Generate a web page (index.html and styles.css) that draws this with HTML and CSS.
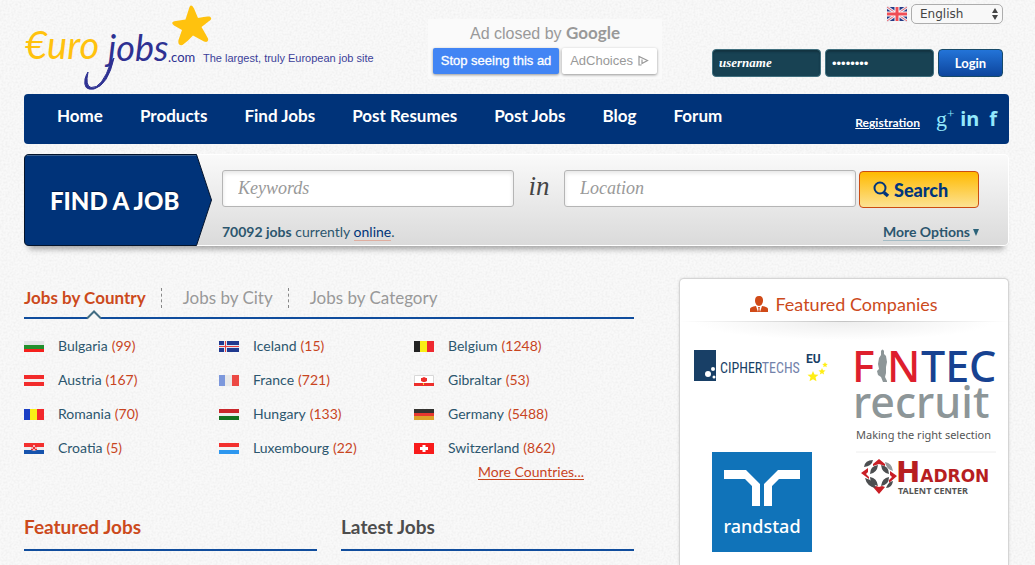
FILE: index.html
```html
<!DOCTYPE html>
<html lang="en">
<head>
<meta charset="utf-8">
<title>Eurojobs.com</title>
<link rel="stylesheet" href="styles.css">
</head>
<body>
<header class="header">
  <a class="logo" href="#" aria-label="Eurojobs.com">
    <svg width="360" height="94" viewBox="24 0 360 94">
      <path d="M189.500 7 Q191.500 3.500 194 8.500 L198 18 Q206 16 209.500 16.500 Q213.500 18.500 208.500 21.500 L201.500 27 Q205 33 208 38.500 Q209 43 204 41.500 L193 35.500 Q188 41 182.500 45 Q177.500 46 178.500 40 L182 30 L174 25.500 Q169.500 22 176 21 L185.500 19.500 Z" fill="#ffc20e"/>
      <text class="logo-euro" x="25" y="59">€uro</text>
      <text class="logo-jobs" x="108" y="61">jobs</text>
      <path d="M114 58 Q108 85 94 89 Q83 91 85 79 Q86 75 88 72 Q85 86 91 87.500 Q102 89 111 62 Z" fill="#2e3192" stroke="#2e3192"/>
      <text class="logo-com" x="168" y="62">.com</text>
      <text class="logo-tag" x="203" y="62">The largest, truly European job site</text>
    </svg>
  </a>
  <div class="ad">
    <p class="ad-title">Ad closed by <b>Google</b></p>
    <div class="ad-actions">
      <button class="ad-stop" type="button">Stop seeing this ad</button>
      <button class="ad-choices" type="button">AdChoices
        <svg width="11" height="12" viewBox="0 0 11 12" fill="none" stroke="#999" stroke-width="1.200"><path d="M3.500 10H1V1.500L9.500 5.500 4 8.500V4.500"/></svg>
      </button>
    </div>
  </div>
  <div class="account">
    <div class="language">
      <svg width="20" height="14" viewBox="0 0 20 14"><path fill="#243a86" d="M0 0h20v14H0z"/><path d="M0 0l20 14M20 0L0 14" stroke="#e4e6f0" stroke-width="3"/><path d="M0 0l20 14M20 0L0 14" stroke="#ec6a70"/><path d="M10 0v14M0 7h20" stroke="#fff" stroke-width="5"/><path d="M10 0v14M0 7h20" stroke="#ef4d55" stroke-width="3"/></svg>
      <span class="select-wrap">
        <select class="select" aria-label="Language"><option>English</option></select>
        <svg class="select-arrows" width="6" height="12" viewBox="0 0 6 12" fill="#444"><path d="M3 0l3 5H0zM3 12L0 7h6z"/></svg>
      </span>
    </div>
    <form class="login">
      <input class="login-field" type="text" value="username" aria-label="Username">
      <input class="login-field login-pass" type="password" value="password" aria-label="Password">
      <button class="login-button" type="button">Login</button>
    </form>
  </div>
</header>

<nav class="nav">
  <div class="nav-links">
    <a href="#">Home</a><a href="#">Products</a><a href="#">Find Jobs</a><a href="#">Post Resumes</a><a href="#">Post Jobs</a><a href="#">Blog</a><a href="#">Forum</a>
  </div>
  <div class="nav-side">
    <a class="register" href="#">Registration</a>
    <a class="social social-g" href="#" aria-label="Google Plus">g<sup>+</sup></a>
    <a class="social" href="#" aria-label="LinkedIn">in</a>
    <a class="social social-f" href="#" aria-label="Facebook">f</a>
  </div>
</nav>

<section class="finder">
  <div class="finder-label">
    <svg class="finder-shape" viewBox="0 0 188 92" preserveAspectRatio="none"><path d="M5 .5H172.500L187.500 46 172.500 91.500H5Q.5 91.500 .5 87V5Q.5 .5 5 .5Z" fill="#003379" stroke="#04142c"/><path d="M3 1.500H172" stroke="#3c5f8c"/></svg>
    <h1>FIND A JOB</h1>
  </div>
  <form class="finder-form">
    <div class="finder-row">
      <input class="finder-input" type="text" placeholder="Keywords" aria-label="Keywords">
      <span class="finder-in">in</span>
      <input class="finder-input" type="text" placeholder="Location" aria-label="Location">
      <button class="search" type="button">
        <svg width="17" height="17" viewBox="0 0 17 17" fill="none" stroke="#00357c"><circle cx="7" cy="7" r="5.500" stroke-width="2"/><path d="M11 11.500l4 3.500" stroke-width="3.500"/></svg>
        Search
      </button>
    </div>
    <div class="finder-info">
      <p><b>70092 jobs</b> currently <a class="online" href="#">online</a>.</p>
      <p class="options"><a href="#">More Options</a> <svg width="6" height="7" viewBox="0 0 6 7"><path d="M0 0h6L3 7z" fill="#2c6379"/></svg></p>
    </div>
  </form>
</section>

<main class="main">
  <div class="content">
    <nav class="tabs">
      <a class="tab tab-active" href="#">Jobs by Country<svg class="notch" width="16" height="10" viewBox="0 0 16 10"><path d="M1 8.500L8 1.500 15 8.500V10H1z" fill="#f7f7f7"/><path d="M1 8.500L8 1.500 15 8.500" fill="none" stroke="#426d83" stroke-width="2"/></svg></a>
      <a class="tab" href="#">Jobs by City</a>
      <a class="tab" href="#">Jobs by Category</a>
    </nav>
    <ul class="countries">
      <li><svg class="flag" viewBox="0 0 20 11"><path fill="#e2e5e5" d="M0 0h20v4H0z"/><path fill="#22902d" d="M0 4h20v4H0z"/><path fill="#f5201c" d="M0 8h20v3H0z"/></svg><a href="#">Bulgaria</a> <span>(99)</span></li>
      <li><svg class="flag" viewBox="0 0 20 11"><path fill="#20398f" d="M0 0h20v11H0z"/><path d="M6.500 0v11M0 5.500h20" stroke="#dce6f5" stroke-width="3"/><path d="M6.500 0v11M0 5.500h20" stroke="#e9403f"/></svg><a href="#">Iceland</a> <span>(15)</span></li>
      <li><svg class="flag" viewBox="0 0 20 11"><path fill="#222" d="M0 0h7v11H0z"/><path fill="#f9ee16" d="M6 0h8v11H6z"/><path fill="#ee2930" d="M13 0h7v11h-7z"/></svg><a href="#">Belgium</a> <span>(1248)</span></li>
      <li><svg class="flag" viewBox="0 0 20 11"><path fill="#f22b2b" d="M0 0h20v11H0z"/><path fill="#f5eeee" d="M0 4h20v3H0z"/></svg><a href="#">Austria</a> <span>(167)</span></li>
      <li><svg class="flag" viewBox="0 0 20 11"><path fill="#7d98dc" d="M0 0h7v11H0z"/><path fill="#e9e9e9" d="M6 0h8v11H6z"/><path fill="#ec4944" d="M13 0h7v11h-7z"/></svg><a href="#">France</a> <span>(721)</span></li>
      <li><svg class="flag" viewBox="0 0 20 11"><path fill="#fff" stroke="#d8d8d8" d="M.5 .5h19v8H.5z"/><path fill="#ed2e2b" d="M0 8h20v3H0zM7 3h1l2-1 2 1h1v3l-2 1H9L7 6z"/><path fill="#f6d137" d="M9 8h1v2H9z"/></svg><a href="#">Gibraltar</a> <span>(53)</span></li>
      <li><svg class="flag" viewBox="0 0 20 11"><path fill="#1b3fc4" d="M0 0h7v11H0z"/><path fill="#f9ee16" d="M6 0h8v11H6z"/><path fill="#f2282c" d="M13 0h7v11h-7z"/></svg><a href="#">Romania</a> <span>(70)</span></li>
      <li><svg class="flag" viewBox="0 0 20 11"><path fill="#ca272c" d="M0 0h20v4H0z"/><path fill="#eee" d="M0 4h20v3H0z"/><path fill="#137322" d="M0 7h20v4H0z"/></svg><a href="#">Hungary</a> <span>(133)</span></li>
      <li><svg class="flag" viewBox="0 0 20 11"><path fill="#343330" d="M0 0h20v4H0z"/><path fill="#e73830" d="M0 4h20v3H0z"/><path fill="#dda329" d="M0 7h20v4H0z"/></svg><a href="#">Germany</a> <span>(5488)</span></li>
      <li><svg class="flag" viewBox="0 0 20 11"><path fill="#f3302e" d="M0 0h20v4H0z"/><path fill="#eee" d="M0 4h20v3H0z"/><path fill="#1653ad" d="M0 7h20v4H0z"/><path fill="#f3b4b4" d="M7 2h6v5l-3 1-3-1z"/><path fill="#ee2c31" d="M7 2h2v2H7zM11 2h2v2h-2zM9 4h2v2H9zM7 6h2v1H7zM11 6h2v1h-2z"/></svg><a href="#">Croatia</a> <span>(5)</span></li>
      <li><svg class="flag" viewBox="0 0 20 11"><path fill="#f3302e" d="M0 0h20v4H0z"/><path fill="#f3f3f3" d="M0 4h20v3H0z"/><path fill="#2d97ef" d="M0 7h20v4H0z"/></svg><a href="#">Luxembourg</a> <span>(22)</span></li>
      <li><svg class="flag" viewBox="0 0 20 11"><path fill="#f81b1b" d="M0 0h20v11H0z"/><path d="M10 2v7M6 5.500h8" stroke="#fff" stroke-width="3"/></svg><a href="#">Switzerland</a> <span>(862)</span></li>
    </ul>
    <p class="more"><a href="#">More Countries...</a></p>
    <div class="jobs">
      <h2 class="jobs-title jobs-featured">Featured Jobs</h2>
      <h2 class="jobs-title">Latest Jobs</h2>
    </div>
  </div>

  <aside class="companies">
    <h2 class="companies-title">
      <svg width="18" height="16" viewBox="0 0 18 16" fill="#d04a18"><path d="M9 0c3 0 4 2 4 4.500S11.500 10 9 10 5 7 5 4.500 6 0 9 0z"/><path d="M0 16v-3q0-2 6-3l2 6zM18 16v-3q0-2-6-3l-2 6zM8 11h2l-.5 2 .5 3H8l.5-3z"/></svg>
      Featured Companies
    </h2>
    <div class="company-grid">
      <a href="#" aria-label="CipherTechs EU">
        <svg width="136" height="36" viewBox="0 0 136 36">
          <path fill="#183f66" d="M0 2h22v31H0z"/><circle cx="14" cy="26" r="3" fill="#fff"/><circle cx="19" cy="21" r="2" fill="#fff"/><circle cx="20" cy="29" r="1.500" fill="#fff"/>
          <text class="cipher" x="26" y="25"><tspan fill="#183f66">CIPHER</tspan><tspan fill="#7382aa">TECHS</tspan></text>
          <text class="cipher-eu" x="112" y="15">EU</text>
          <path fill="#ffee14" d="M119 23l1.500 3.500 4 .3-3 2.500 1 4-3.500-2-3.500 2 1-4-3-2.500 4-.3zM128 20l1 2.300 2.500.2-2 1.700.6 2.400-2.100-1.300-2.200 1.300.7-2.400-2-1.700 2.500-.2zM131 14l.8 1.800 2 .2-1.500 1.200.4 2-1.700-1-1.700 1 .4-2-1.500-1.200 2-.2z"/>
        </svg>
      </a>
      <a href="#" aria-label="Fintec Recruit">
        <svg width="142" height="104" viewBox="0 0 142 104">
          <text class="fintec" y="34"><tspan x="-3" fill="#de1f2d">F</tspan><tspan x="32" fill="#de1f2d">N</tspan><tspan x="66" fill="#174291">TEC</tspan></text>
          <path fill="#8d9698" d="M26 3q1.500-3 3 0v3l2 2 1 6-1 5v6l-1 4 2 4v1h-4l-2-5-3-2-1-4 2-2-1-5 1-6 2-3z"/>
          <text class="recruit" x="-2" y="70">recruit</text>
          <text class="fintec-tag" x="1" y="91">Making the right selection</text>
          <path d="M1 104h140" stroke="#eee"/>
        </svg>
      </a>
      <a href="#" aria-label="Randstad">
        <svg width="100" height="100" viewBox="0 0 100 100">
          <path fill="#1073b9" d="M0 0h100v100H0z"/>
          <path fill="#fff" d="M12 18h22l14 14v22h-8V34l-7-7H12zM88 18H66L52 32v22h8V34l7-7h21z"/>
          <text class="randstad" x="50" y="81" text-anchor="middle">randstad</text>
        </svg>
      </a>
      <a href="#" aria-label="Hadron Talent Center">
        <svg width="132" height="44" viewBox="0 0 132 44">
          <g fill="#c91f26"><path d="M13 12l6-5 6 5v2l-6-2-6 2z"/><path d="M1 21l7-5v4l-2 2 3 3v2z"/><path d="M37 24l-7-5v4l2 2-3 3v3z"/><path d="M13 35l3-1 3 1 3-1 3 1-6 7z"/></g>
          <g fill="#4c4e50"><path d="M4 15q1-7 9-7-1 6-9 7z"/><path d="M25 10q7 1 8 9-7-2-8-9z" fill="#96999b"/><path d="M5 26q9 2 11 10-9-1-11-10z"/><path d="M26 36q2-6 7-7-1 7-7 7z"/><path d="M10 22q0-8 8-9-1 8-8 9zM21 13q8 1 8 9-7-1-8-9zM10 25q7 1 8 9-8-1-8-9zM29 25q0 8-8 9 1-8 8-9z"/></g>
          <text class="hadron" x="36" y="30"><tspan class="hadron-h">H</tspan><tspan>ADRON</tspan></text>
          <text class="hadron-sub" x="38" y="42">TALENT CENTER</text>
        </svg>
      </a>
    </div>
  </aside>
</main>
</body>
</html>
```
FILE: styles.css
```css
* { box-sizing: border-box; }

body {
  margin: 0;
  padding: 0 26px 0 24px;
  min-height: 100vh;
  display: flex;
  flex-direction: column;
  font-family: Lato, "Liberation Sans", sans-serif;
  font-size: 14px;
  line-height: 20px;
  color: #2c566e;
  background-color: #f9f9f9;
  background-image: url("data:image/svg+xml,%3Csvg xmlns='http://www.w3.org/2000/svg' width='150' height='150'%3E%3Cfilter id='n'%3E%3CfeTurbulence type='fractalNoise' baseFrequency='.5' numOctaves='2' stitchTiles='stitch'/%3E%3CfeColorMatrix values='0 0 0 0 0 0 0 0 0 0 0 0 0 0 0 0 0 0 .08 -.03'/%3E%3C/filter%3E%3Crect width='150' height='150' filter='url(%23n)'/%3E%3C/svg%3E");
}

h1, h2, p, ul { margin: 0; padding: 0; }
a { color: inherit; text-decoration: none; }
button, input, select { font: inherit; margin: 0; }
svg { display: block; flex: none; overflow: visible; }

/* Header */
.header { display: flex; height: 94px; }
.logo-euro { font: italic 38px Lato, sans-serif; fill: #ffc20e; }
.logo-jobs { font: italic 36px Lato, sans-serif; fill: #2e3192; }
.logo-com { font: 13px Lato, sans-serif; fill: #2e3192; }
.logo-tag { font: 11px "Liberation Sans", sans-serif; fill: #3c3f99; }

.ad {
  align-self: flex-start;
  width: 234px;
  margin: 19px 0 0 44px;
  padding: 4px 5px 5px;
  background: #fafafa;
  font-family: "Liberation Sans", Arial, sans-serif;
}
.ad-title { font-size: 16px; line-height: 20px; color: #999; text-align: center; margin-bottom: 4px; }
.ad-title b { font-family: Lato, sans-serif; font-size: 17px; }
.ad-actions { display: flex; gap: 3px; }
.ad-actions button {
  height: 26px;
  padding: 0 8px;
  border: 0;
  border-radius: 2px;
  box-shadow: 0 1px 3px rgba(0, 0, 0, .4);
  font-size: 13px;
  white-space: nowrap;
}
.ad-actions .ad-stop { flex: 1; padding: 0; background: #4285f4; color: #fff; -webkit-text-stroke: 0.3px #fff; }
.ad-choices { display: flex; align-items: center; gap: 5px; background: #fff; color: #999; }

.account { margin-left: auto; padding: 4px 6px 0 0; }
.language { display: flex; justify-content: flex-end; align-items: center; gap: 4px; margin-bottom: 25px; }
.select-wrap { position: relative; }
.select {
  display: block;
  width: 92px;
  height: 20px;
  padding: 0 8px;
  appearance: none;
  border: 1px solid #adadad;
  border-radius: 5px;
  background: #f8f8f8;
  color: #444;
  font: 12px "DejaVu Sans", sans-serif;
}
.select-arrows { position: absolute; right: 5px; top: 4px; pointer-events: none; }
.login { display: flex; gap: 4px; }
.login-field {
  width: 109px;
  height: 28px;
  padding: 0 6px;
  border: 1px solid #41707f;
  border-radius: 4px;
  background: #184253;
  color: #fff;
  font: italic bold 13px "Liberation Serif", serif;
  box-shadow: inset 0 2px 2px #123340;
}
.login-pass { font: 13px "Liberation Sans", sans-serif; }
.login-button {
  width: 65px;
  height: 28px;
  padding: 0;
  border: 1px solid #174a69;
  border-radius: 4px;
  background: linear-gradient(#2374d8, #0d459d);
  color: #fff;
  font-size: 13px;
  font-weight: 700;
}

/* Navigation */
.nav {
  display: flex;
  justify-content: space-between;
  height: 50px;
  padding: 0 12px 0 33px;
  border-radius: 4px;
  background: #003379;
  color: #fff;
}
.nav-links { display: flex; gap: 37px; padding-top: 12px; font-size: 17px; font-weight: 700; white-space: nowrap; }
.nav-side { display: flex; align-items: center; }
.register { margin: 8px 16px 0 0; font-size: 12px; font-weight: 700; text-decoration: underline; }
.social { margin-right: 10px; color: #92e8fc; font: bold 20px/24px "Noto Sans", sans-serif; }
.social-g { margin-right: 6px; font: 22px/24px "Liberation Serif", serif; }
.social-g sup { font-size: 13px; line-height: 0; }
.social-f { margin-right: 0; }

/* Job search */
.finder {
  display: flex;
  margin-top: 10px;
  height: 92px;
  border-radius: 5px;
  background: linear-gradient(#fafafa, #dadada);
  box-shadow: inset 0 0 0 1px #fff, 0 8px 6px -5px rgba(0, 0, 0, .35);
}
.finder-label { position: relative; width: 188px; display: flex; align-items: center; padding: 2px 0 0 26px; }
.finder-shape { position: absolute; inset: 0; width: 100%; height: 100%; }
.finder-label h1 { position: relative; color: #fff; font-size: 24px; line-height: 30px; font-weight: 900; white-space: nowrap; text-shadow: 0 -1px 1px #001b44; }
.finder-form { flex: 1; padding: 16px 30px 0 10px; }
.finder-row { display: flex; }
.finder-input {
  flex: 1;
  min-width: 0;
  height: 37px;
  padding: 0 15px;
  border: 1px solid #b5b5b5;
  border-radius: 3px;
  background: #fff;
  box-shadow: inset 0 2px 4px #e4e4e4;
  font: italic 18px "Liberation Serif", serif;
}
.finder-input::placeholder { color: #999; }
.finder-in { width: 50px; text-align: center; color: #444; font: italic 27px/32px "Liberation Serif", serif; }
.search {
  display: flex;
  align-items: center;
  gap: 4px;
  width: 120px;
  height: 37px;
  margin: 1px 0 0 3px;
  padding: 0 13px;
  border: 1px solid #cc4c12;
  border-radius: 4px;
  background: linear-gradient(#ffba00, #fce293);
  color: #00357c;
  font-size: 18px;
  font-weight: 900;
}
.finder-info { display: flex; justify-content: space-between; margin-top: 14px; }
.finder-info p { white-space: nowrap; }
.online { color: #003379; border-bottom: 1px solid #dfaea0; }
.options { display: flex; align-items: center; gap: 3px; font-weight: 700; }
.options a { line-height: 17px; border-bottom: 1px solid #a4bcc5; }

/* Main columns */
.main { flex: 1; display: flex; gap: 45px; margin-top: 32px; }
.content { flex: 1; }
.tabs { display: flex; height: 41px; padding-top: 10px; border-bottom: 2px solid #104d9d; font-size: 17px; }
.tab { height: 20px; color: #999; white-space: nowrap; }
.tab + .tab { margin-left: 15px; padding-left: 21px; border-left: 1px dashed #888; }
.tab-active { position: relative; color: #cc4a1c; font-weight: 700; }
.notch { position: absolute; left: 62px; top: 22px; }
.countries { display: grid; grid-template-columns: 195px 195px 1fr; gap: 14px 0; margin-top: 17px; list-style: none; }
.countries li { display: flex; align-items: center; }
.countries span { color: #c8451f; padding-left: 4px; }
.flag { width: 20px; height: 11px; margin-right: 14px; }
.more { margin: 4px 50px 0 0; text-align: right; color: #c8451f; }
.more a { text-decoration: underline; text-underline-offset: 2px; }
.jobs { display: grid; grid-template-columns: 1fr 1fr; gap: 24px; margin-top: 35px; }
.jobs-title { padding-bottom: 12px; border-bottom: 2px solid #104d9d; color: #4d4d4d; font-size: 19px; line-height: 20px; }
.jobs-featured { color: #cc4a1c; }

/* Featured companies */
.companies {
  width: 330px;
  border: 1px solid #d5d5d5;
  border-bottom: 0;
  border-radius: 5px 5px 0 0;
  background: #fff;
  box-shadow: 0 0 3px rgba(0, 0, 0, .12);
}
.companies-title {
  display: flex;
  justify-content: center;
  align-items: center;
  gap: 7px;
  height: 43px;
  padding-top: 8px;
  border-bottom: 1px solid;
  border-image: linear-gradient(90deg, #fff, #c4c4c4, #fff) 1;
  color: #cc4a1c;
  font-size: 18px;
  font-weight: 400;
}
.company-grid {
  display: grid;
  grid-template-columns: 1fr 1fr;
  justify-items: center;
  padding-top: 26px;
  background: radial-gradient(ellipse 150px 18px at 50% 0, #eee, #fff);
}
.cipher { font: 14px "Roboto Condensed", "DejaVu Sans Condensed", sans-serif; }
.cipher-eu { font: bold 12px Roboto, sans-serif; fill: #183f66; }
.fintec { font: 500 43px "Noto Sans", sans-serif; }
.recruit { font: 500 43px "Noto Sans", sans-serif; fill: #8d9698; }
.fintec-tag { font: 11px "Noto Sans", sans-serif; fill: #555; }
.randstad { font: 500 18px "Noto Sans", sans-serif; fill: #fff; }
.hadron { font: bold 17px "DejaVu Sans", sans-serif; fill: #b71e21; }
.hadron-h { font-size: 29px; }
.hadron-sub { font: bold 9px "Noto Sans", sans-serif; fill: #555; }
```
